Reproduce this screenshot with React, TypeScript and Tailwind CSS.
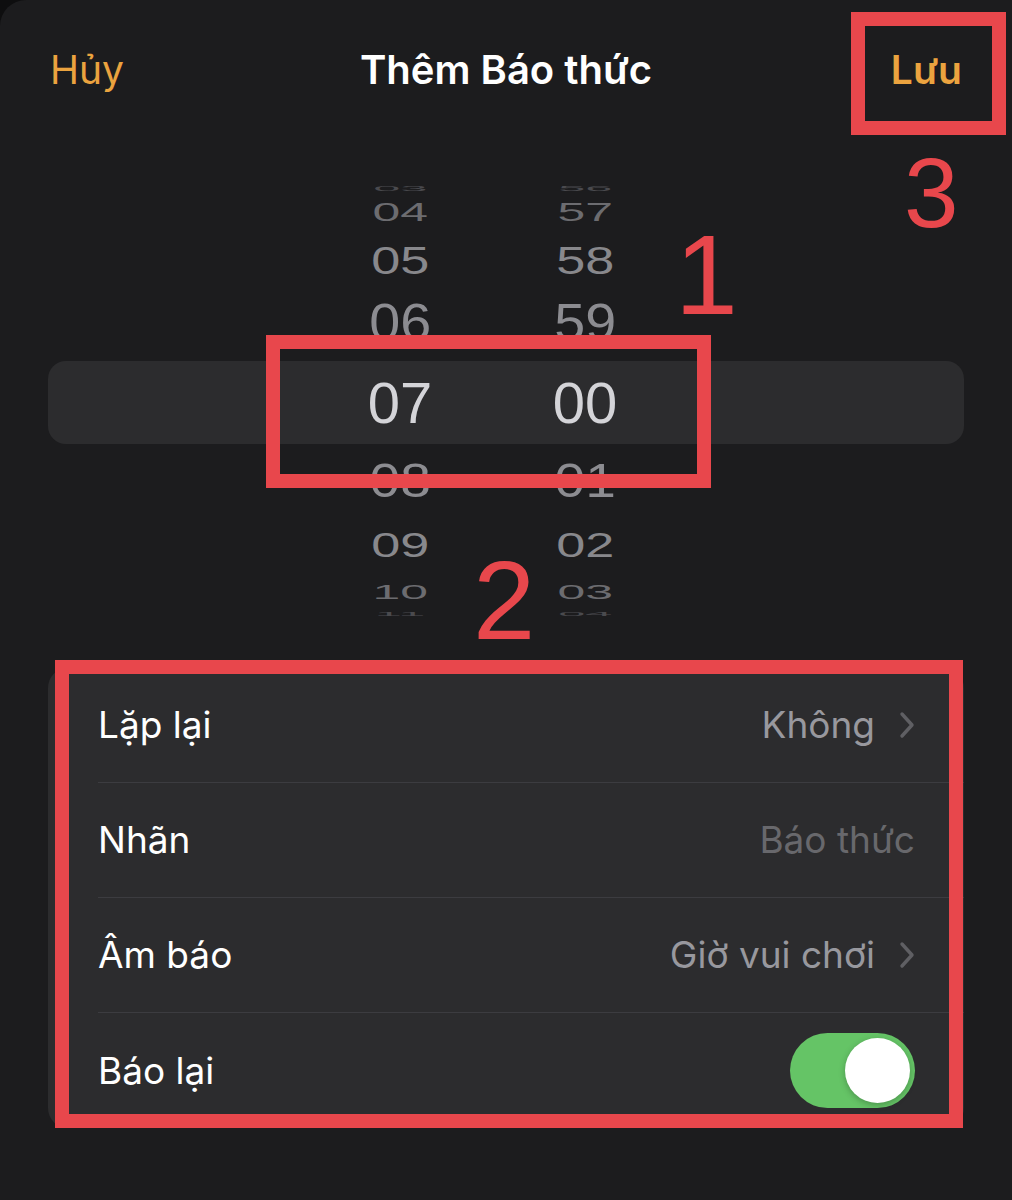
import React from "react";

type WheelRow = {
	hour: string;
	minute: string;
	row: string;
	text: string;
};

// wheel rows, top to bottom; the middle one sits in the selection bar
const ABOVE: WheelRow[] = [
	{ hour: "03", minute: "56", row: "h-[24px]", text: "text-[#4a4a4e] scale-y-[0.13] scale-x-[0.84]" },
	{ hour: "04", minute: "57", row: "h-[24px]", text: "text-[#6c6c70] scale-y-[0.45] scale-x-[0.86]" },
	{ hour: "05", minute: "58", row: "h-[72px]", text: "text-[#88888c] scale-y-[0.68] scale-x-[0.9]" },
	{ hour: "06", minute: "59", row: "h-[52px]", text: "text-[#8c8c91] scale-y-[0.9] scale-x-[0.96]" },
];

const BELOW: WheelRow[] = [
	{ hour: "08", minute: "01", row: "h-[72px]", text: "text-[#8c8c91] scale-y-[0.84] scale-x-[0.95]" },
	{ hour: "09", minute: "02", row: "h-[58px]", text: "text-[#88888c] scale-y-[0.62] scale-x-[0.9]" },
	{ hour: "10", minute: "03", row: "h-[36px]", text: "text-[#6c6c70] scale-y-[0.36] scale-x-[0.86]" },
	{ hour: "11", minute: "04", row: "h-[8px]", text: "text-[#4a4a4e] scale-y-[0.1] scale-x-[0.84]" },
];

function WheelLine({ item }: { item: WheelRow }) {
	return (
		<div className={`${item.row} mx-[48px] flex items-center pl-[288px] gap-[57px]`}>
			<div className="w-[128px] flex justify-center">
				<span className={`block leading-none text-[58px] ${item.text}`}>{item.hour}</span>
			</div>
			<div className="w-[128px] flex justify-center">
				<span className={`block leading-none text-[58px] ${item.text}`}>{item.minute}</span>
			</div>
		</div>
	);
}

function Chevron() {
	return (
		<svg width="16" height="28" viewBox="0 0 16 28" fill="none" className="shrink-0">
			<path
				d="M3 3 L13 14 L3 25"
				stroke="#5f5f63"
				strokeWidth="3.4"
				strokeLinecap="round"
				strokeLinejoin="round"
			/>
		</svg>
	);
}

function SettingRow({
	label,
	children,
	last,
}: {
	label: string;
	children: React.ReactNode;
	last?: boolean;
}) {
	return (
		<div className="h-[115px] pl-[50px] flex">
			<div
				className={`flex-1 flex items-center justify-between pr-[49px] ${
					last ? "" : "border-b border-[#3c3c40]"
				}`}
			>
				<span className="text-[37px] text-white">{label}</span>
				{children}
			</div>
		</div>
	);
}

export default function App() {
	return (
		<div className="relative w-[1012px] h-[1200px] overflow-hidden bg-[#0e0e0f] font-['Inter',sans-serif]">
			<div className="h-full rounded-tl-[26px] bg-[#1c1c1e] flex flex-col">
				{/* header */}
				<div className="h-[140px] px-[50px] flex items-center justify-between">
					<span className="text-[39px] text-[#eba33f] w-[140px]">Hủy</span>
					<span className="text-[40px] font-semibold text-white">Thêm Báo thức</span>
					<span className="text-[39px] font-semibold text-[#eba33f] w-[140px] text-right">Lưu</span>
				</div>

				{/* time wheel */}
				<div className="mt-[36px] font-['Liberation_Sans',Arial,sans-serif]">
					{ABOVE.map((item) => (
						<WheelLine key={item.hour} item={item} />
					))}
					<div className="mt-[13px] h-[83px] mx-[48px] rounded-[18px] bg-[#2c2c2e] flex items-center pl-[288px] gap-[57px]">
						<div className="w-[128px] flex justify-center">
							<span className="block leading-none text-[58px] text-[#d4d4d8]">07</span>
						</div>
						<div className="w-[128px] flex justify-center">
							<span className="block leading-none text-[58px] text-[#d4d4d8]">00</span>
						</div>
					</div>
					{BELOW.map((item) => (
						<WheelLine key={item.hour} item={item} />
					))}
				</div>

				{/* settings list */}
				<div className="mt-[50px] mx-[48px] rounded-[20px] bg-[#2c2c2e] overflow-hidden">
					<SettingRow label="Lặp lại">
						<div className="flex items-center gap-[24px]">
							<span className="text-[37px] text-[#98989e]">Không</span>
							<Chevron />
						</div>
					</SettingRow>
					<SettingRow label="Nhãn">
						<span className="text-[37px] text-[#68686c]">Báo thức</span>
					</SettingRow>
					<SettingRow label="Âm báo">
						<div className="flex items-center gap-[24px]">
							<span className="text-[37px] text-[#98989e]">Giờ vui chơi</span>
							<Chevron />
						</div>
					</SettingRow>
					<SettingRow label="Báo lại" last>
						<div className="w-[125px] h-[75px] rounded-full bg-[#65c466] p-[5px] flex justify-end">
							<div className="w-[65px] h-[65px] rounded-full bg-white shadow-[0_2px_6px_rgba(0,0,0,0.25)]" />
						</div>
					</SettingRow>
				</div>
			</div>

			{/* red annotations */}
			<div className="absolute left-[851px] top-[12px] w-[155px] h-[123px] border-[14px] border-[#e8474c]" />
			<div className="absolute left-[266px] top-[335px] w-[445px] h-[153px] border-[14px] border-[#e8474c]" />
			<div className="absolute left-[55px] top-[660px] w-[908px] h-[468px] border-[14px] border-[#e8474c]" />
			<span className="absolute left-[904px] top-[144px] text-[98px] leading-none text-[#e8474c] font-['Liberation_Sans',Arial,sans-serif]">
				3
			</span>
			<span className="absolute left-[675px] top-[219px] text-[113px] leading-none text-[#e8474c] font-['Liberation_Sans',Arial,sans-serif]">
				1
			</span>
			<span className="absolute left-[473px] top-[545px] text-[112px] leading-none text-[#e8474c] font-['Liberation_Sans',Arial,sans-serif]">
				2
			</span>
		</div>
	);
}
